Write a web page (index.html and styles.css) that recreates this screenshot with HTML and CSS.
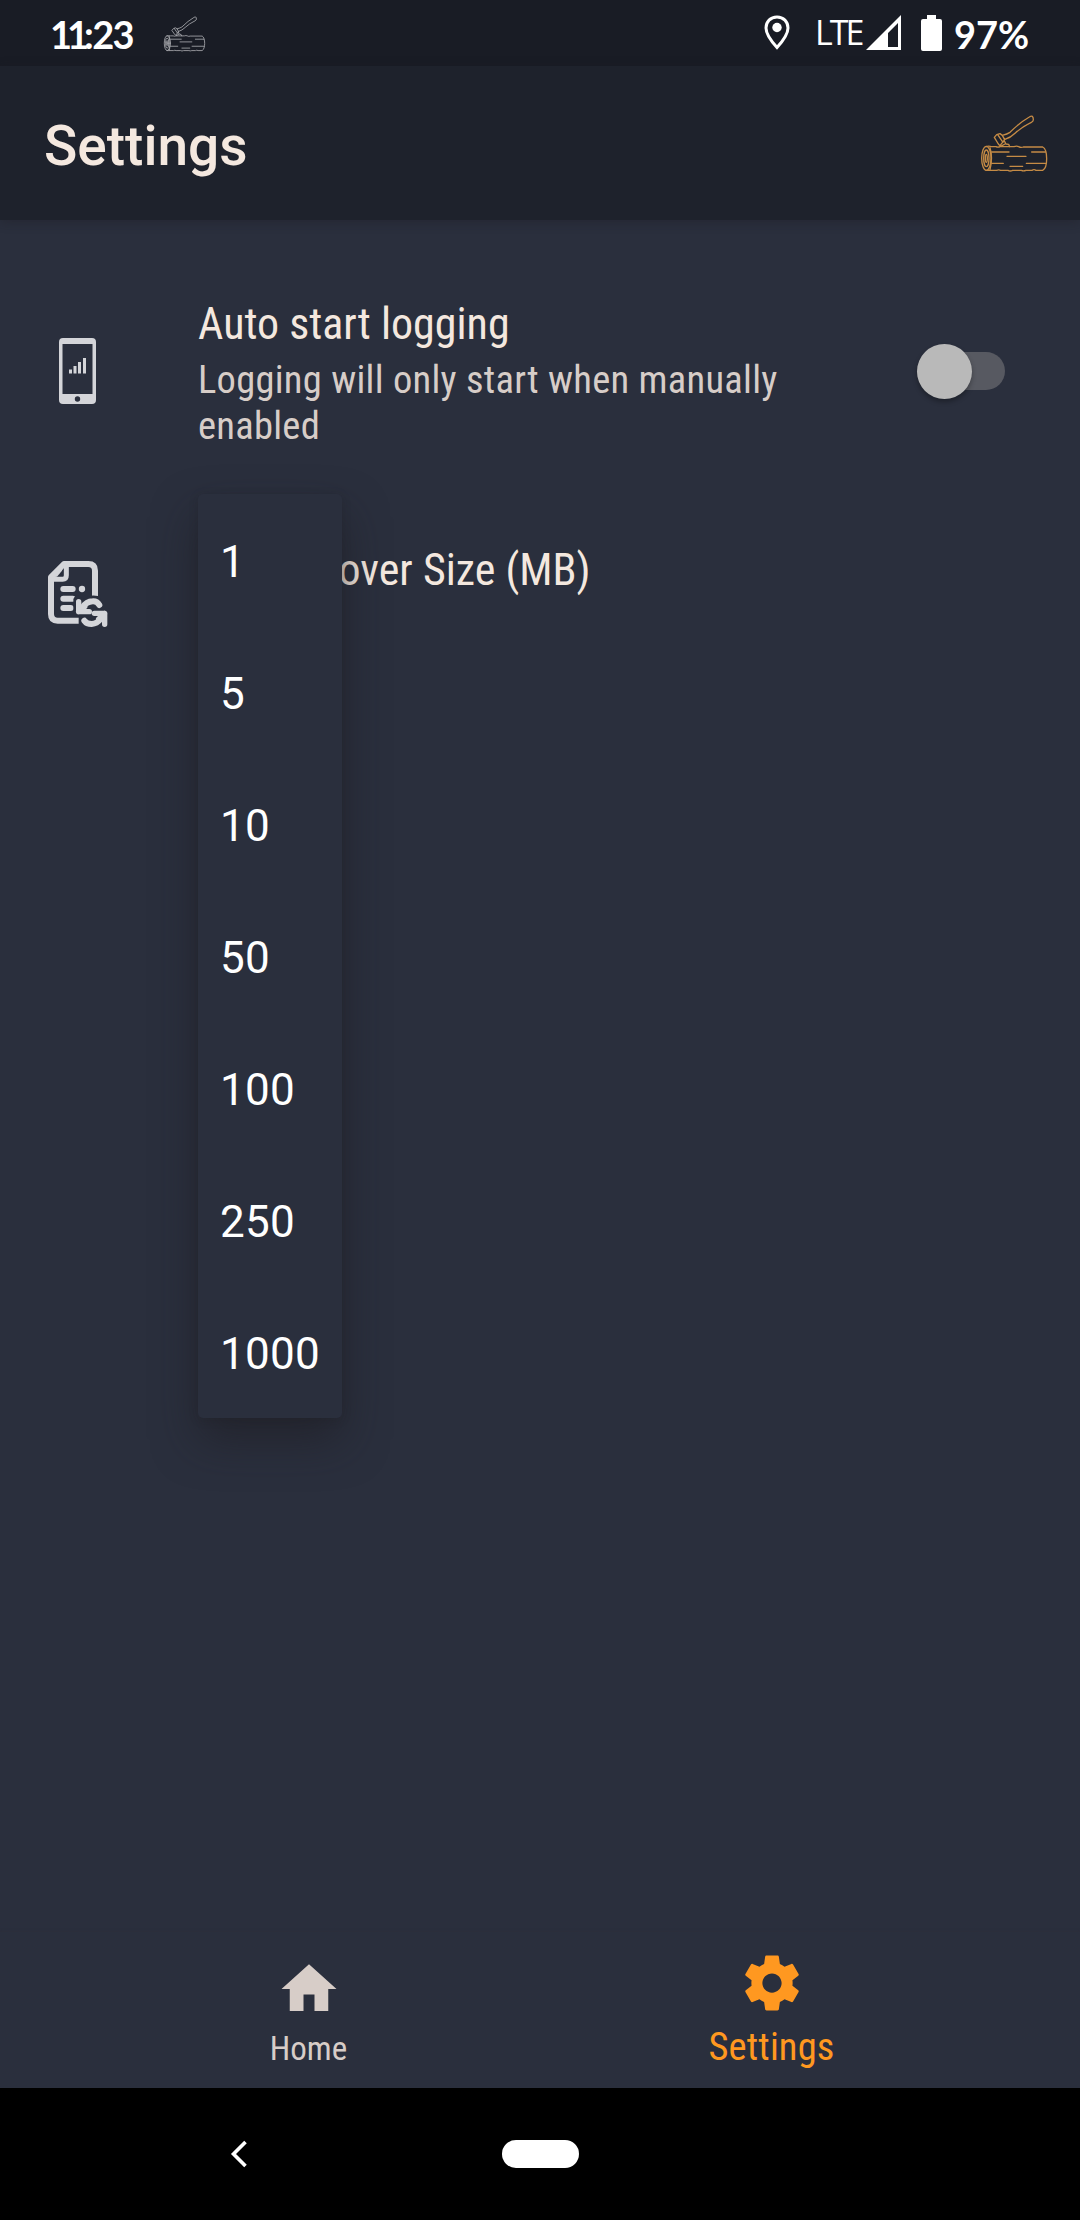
FILE: index.html
```html
<!DOCTYPE html>
<html lang="en">
<head>
<meta charset="utf-8">
<title>Settings</title>
<link rel="stylesheet" href="styles.css">
</head>
<body>
<svg width="0" height="0" class="defs">
  <symbol id="log" viewBox="0 0 270 225">
    <g fill="none" stroke="currentColor" stroke-linejoin="round" stroke-linecap="round">
      <path d="M48 125 q8 -3 16 0 h14 q6 3 12 0 h42 q8 -3 14 0 q7 4 14 1 h58 c16 8 16 62 0 70 h-20 q-6 -4 -12 0 h-18 q-8 3 -14 0 h-26 q-8 4 -14 0 h-22 q-6 -3 -12 0 h-32"/>
      <ellipse cx="49" cy="160" rx="14" ry="36"/>
      <ellipse cx="49" cy="160" rx="8" ry="25"/>
      <ellipse cx="49" cy="160" rx="3" ry="12"/>
      <path d="M60 128 q9 30 0 66"/>
      <path d="M65 141 H117 M185 141 H226 M111 154 H168 M65 175 H100 M169 175 H227 M120 184 H158"/>
      <path d="M73 97 L80 89 L90 86 L97 91 L104 104 L90 122 L85 117 Z M83 89 L99 112 M97 91 Q112 87 120 82 Q150 52 178 36 Q190 28 190 44 Q190 49 184 52 Q155 66 136 84 Q122 98 103 104 M102 106 L108 117 L116 118 L119 125 M92 124 L105 117"/>
    </g>
  </symbol>
</svg>
<div class="screen">
  <header class="status">
    <span class="clock"><span class="hours">11</span>:23</span>
    <svg class="status-log"><use href="#log"/></svg>
    <span class="spacer"></span>
    <svg class="pin" viewBox="0 0 26 36"><path d="M13 2 C6.500 2 2 6.700 2 13 C2 20 8 27 13 32.500 C18 27 24 20 24 13 C24 6.700 19.500 2 13 2Z" fill="none" stroke="#fff" stroke-width="3"/><circle cx="13" cy="12.500" r="4.700" fill="#fff"/></svg>
    <span class="lte">LTE</span>
    <svg class="signal" viewBox="0 0 35 35"><path fill="#fff" fill-rule="evenodd" d="M35 0 V35 H0Z M32 8 L22 18 V32 H32Z"/></svg>
    <svg class="battery" viewBox="0 0 21 36"><path fill="#fff" d="M6 0 H15 V4 H19 Q21 4 21 6 V34 Q21 36 19 36 H2 Q0 36 0 34 V6 Q0 4 2 4 H6Z"/></svg>
    <span class="percent">97%</span>
  </header>
  <div class="appbar">
    <h1>Settings</h1>
    <svg class="app-log"><use href="#log"/></svg>
  </div>
  <main>
    <section class="row auto">
      <div class="icon-col">
        <svg class="phone" viewBox="0 0 37 66"><path fill="#d4d5d9" fill-rule="evenodd" d="M4 0 H33 Q37 0 37 4 V62 Q37 66 33 66 H4 Q0 66 0 62 V4 Q0 0 4 0Z M3.500 6 V56 H33.500 V6Z M18.500 58.300 A2.700 2.700 0 1 0 18.500 63.700 A2.700 2.700 0 1 0 18.500 58.300Z"/><path fill="#d4d5d9" d="M10 31.500h3v4h-3z M14.500 28h3v7.500h-3z M19 24h3v11.500h-3z M24 20h3v15.500h-3z"/></svg>
      </div>
      <div class="texts">
        <div class="title">Auto start logging</div>
        <div class="summary">Logging will only start when manually<br>enabled</div>
      </div>
      <div class="switch"><div class="thumb"></div></div>
    </section>
    <section class="row roll">
      <div class="icon-col">
        <svg class="doc" viewBox="0 0 240 240"><g fill="none" stroke="#d4d5d9" stroke-width="18" stroke-linecap="butt" stroke-linejoin="round"><path d="M165 141 V62 Q165 42 145 42 H72 L33 81 V192 Q33 212 53 212 H116"/><path d="M79 42 V76 Q79 88 68 88 H33" stroke-width="15"/><path d="M70 117 H98 M70 146 H98 M70 174 H92" stroke-linecap="round"/></g><path d="M30 82 L72 39 L66 62 L51 80Z" fill="#d4d5d9"/><circle cx="126" cy="117" r="9.500" fill="#d4d5d9"/><path d="M101 190 L100 148 Q104 134 118 138 L130 148 Q147 132 174 138 L208 176 V236 H124 L118 200 Z" fill="#2a2f3d"/><g fill="none" stroke="#d4d5d9" stroke-width="16" stroke-linecap="round" stroke-linejoin="round"><path d="M116 155 V185 H148 M116 185 L134 170"/><path d="M128 172 Q139 155 158 154 Q171 153 178 165" stroke-width="18"/><path d="M194 223 V190 H163 M194 191 L176 207"/><path d="M182 207 Q171 221 155 222 Q140 222 133 212" stroke-width="18"/></g></svg>
      </div>
      <div class="texts">
        <div class="title">Log Rollover Size (MB)</div>
      </div>
      <ul class="menu">
        <li>1</li><li>5</li><li>10</li><li>50</li><li>100</li><li>250</li><li>1000</li>
      </ul>
    </section>
  </main>
  <nav class="tabs">
    <div class="tab home">
      <svg viewBox="0 0 24 24"><path fill="currentColor" d="M10 20v-6h4v6h5v-8h3L12 3 2 12h3v8z"/></svg>
      <span>Home</span>
    </div>
    <div class="tab active">
      <svg viewBox="0 0 24 24"><path fill="currentColor" d="M19.430 12.980c.04-.32.07-.64.07-.98s-.03-.66-.07-.98l2.110-1.650c.19-.15.24-.42.12-.64l-2-3.460c-.12-.22-.39-.3-.61-.22l-2.490 1c-.52-.4-1.080-.73-1.690-.98l-.38-2.650C14.460 2.180 14.250 2 14 2h-4c-.25 0-.46.18-.49.42l-.38 2.650c-.61.25-1.170.59-1.690.98l-2.490-1c-.23-.09-.49 0-.61.22l-2 3.460c-.13.22-.07.49.12.64l2.110 1.650c-.04.32-.07.65-.07.98s.03.66.07.98l-2.110 1.650c-.19.15-.24.42-.12.64l2 3.460c.12.22.39.3.61.22l2.490-1c.52.4 1.080.73 1.690.98l.38 2.650c.03.24.24.42.49.42h4c.25 0 .46-.18.49-.42l.38-2.650c.61-.25 1.170-.59 1.690-.98l2.490 1c.23.09.49 0 .61-.22l2-3.460c.12-.22.07-.49-.12-.64l-2.110-1.650zM12 15.500c-1.930 0-3.500-1.570-3.500-3.500s1.570-3.500 3.500-3.500 3.500 1.570 3.500 3.500-1.570 3.500-3.500 3.500z"/></svg>
      <span>Settings</span>
    </div>
  </nav>
  <footer class="sysnav">
    <svg class="back" viewBox="0 0 18 28"><path d="M15.500 2 L3.500 14 L15.500 26" fill="none" stroke="#fff" stroke-width="3.600"/></svg>
    <div class="pill"></div>
  </footer>
</div>
</body>
</html>
```
FILE: styles.css
```css
* { box-sizing: border-box; margin: 0; padding: 0; }
body { background: #2a2f3d; font-family: Roboto, sans-serif; }
.defs { display: block; }
svg { display: block; flex: none; }
.screen { display: flex; flex-direction: column; width: 1080px; height: 2220px; overflow: hidden; }

.status { display: flex; align-items: flex-start; height: 66px; padding-left: 50px; background: #191c25; color: #fff; font-family: Lato, sans-serif; white-space: nowrap; }
.clock { width: 107px; margin-top: 11px; font-size: 38px; font-weight: 700; line-height: 46px; letter-spacing: -1.7px; }
.hours { letter-spacing: -5px; }
.status-log { width: 56px; height: 46.6px; margin-top: 9.5px; color: #a9abaf; stroke-width: 4; }
.spacer { flex: 1; }
.pin { width: 26px; height: 36px; margin: 14.5px 25px 0 0; }
.lte { width: 51px; margin-top: 9px; font-family: "Open Sans", sans-serif; font-size: 34px; line-height: 46px; letter-spacing: -3px; }
.signal { width: 35px; height: 35px; margin: 15px 20px 0 0; }
.battery { width: 21px; height: 36px; margin: 15px 12px 0 0; }
.percent { width: 126px; margin-top: 11px; font-size: 38px; font-weight: 700; line-height: 46px; }

.appbar { display: flex; justify-content: space-between; height: 154px; padding: 39px 20px 0 44px; background: #1e222c; box-shadow: 0 2px 10px rgba(30, 28, 35, .4); z-index: 1; }
h1 { font-size: 55px; font-weight: 500; line-height: 82px; color: #f4e8df; }
.app-log { width: 90px; height: 75px; color: #c58b45; stroke-width: 4; }

main { flex: 1; padding-top: 71px; }
.row { position: relative; display: flex; }
.auto { height: 214px; }
.roll { height: 132px; padding-top: 39px; }
.icon-col { width: 198px; }
.phone { width: 37px; height: 66px; margin: 47px 0 0 59px; }
.doc { width: 80px; height: 80px; margin: 6px 0 0 40px; }
.texts { flex: 1; font-stretch: 75%; white-space: nowrap; }
.title { font-size: 44px; line-height: 52px; color: #f4e8df; padding-top: 7px; }
.summary { font-size: 38.5px; line-height: 46px; letter-spacing: .28px; color: #d7cdc8; padding-top: 7px; }
.roll .title { padding-top: 0; }
.switch { width: 88px; height: 38px; margin: 61px 75px 0 0; border-radius: 19px; background: #575961; }
.thumb { width: 55px; height: 55px; margin-top: -8.5px; border-radius: 50%; background: #b9b9b9; box-shadow: 0 3px 5px rgba(0, 0, 0, .3); }

.menu { position: absolute; left: 198px; top: -11px; width: 144px; border-radius: 5px; background: #2a2f3d; list-style: none; box-shadow: 0 22px 44px rgba(30, 28, 32, .55), 0 2px 10px rgba(30, 28, 32, .2); }
.menu li { height: 132px; padding-left: 22px; font-size: 44px; line-height: 136px; letter-spacing: .3px; color: #fff; }

.tabs { display: flex; height: 156px; padding: 0 77px; background: #2a2f3d; box-shadow: 0 -1px 2px rgba(48, 44, 56, .5); }
.tab { display: flex; flex: 1; flex-direction: column; align-items: center; padding-top: 24px; font-size: 33px; line-height: 40px; font-stretch: 75%; color: #d7cdc8; }
.tab svg { width: 66px; height: 66px; }
.tab span { padding-top: 7px; }
.active { padding-top: 18px; font-size: 38.5px; letter-spacing: .15px; color: #ff9820; }
.active span { padding-top: 11px; }

.sysnav { display: flex; align-items: center; height: 132px; padding-left: 230px; background: #000; }
.back { width: 18px; height: 28px; }
.pill { width: 77px; height: 28px; margin-left: 254px; border-radius: 14px; background: #fff; }
```
